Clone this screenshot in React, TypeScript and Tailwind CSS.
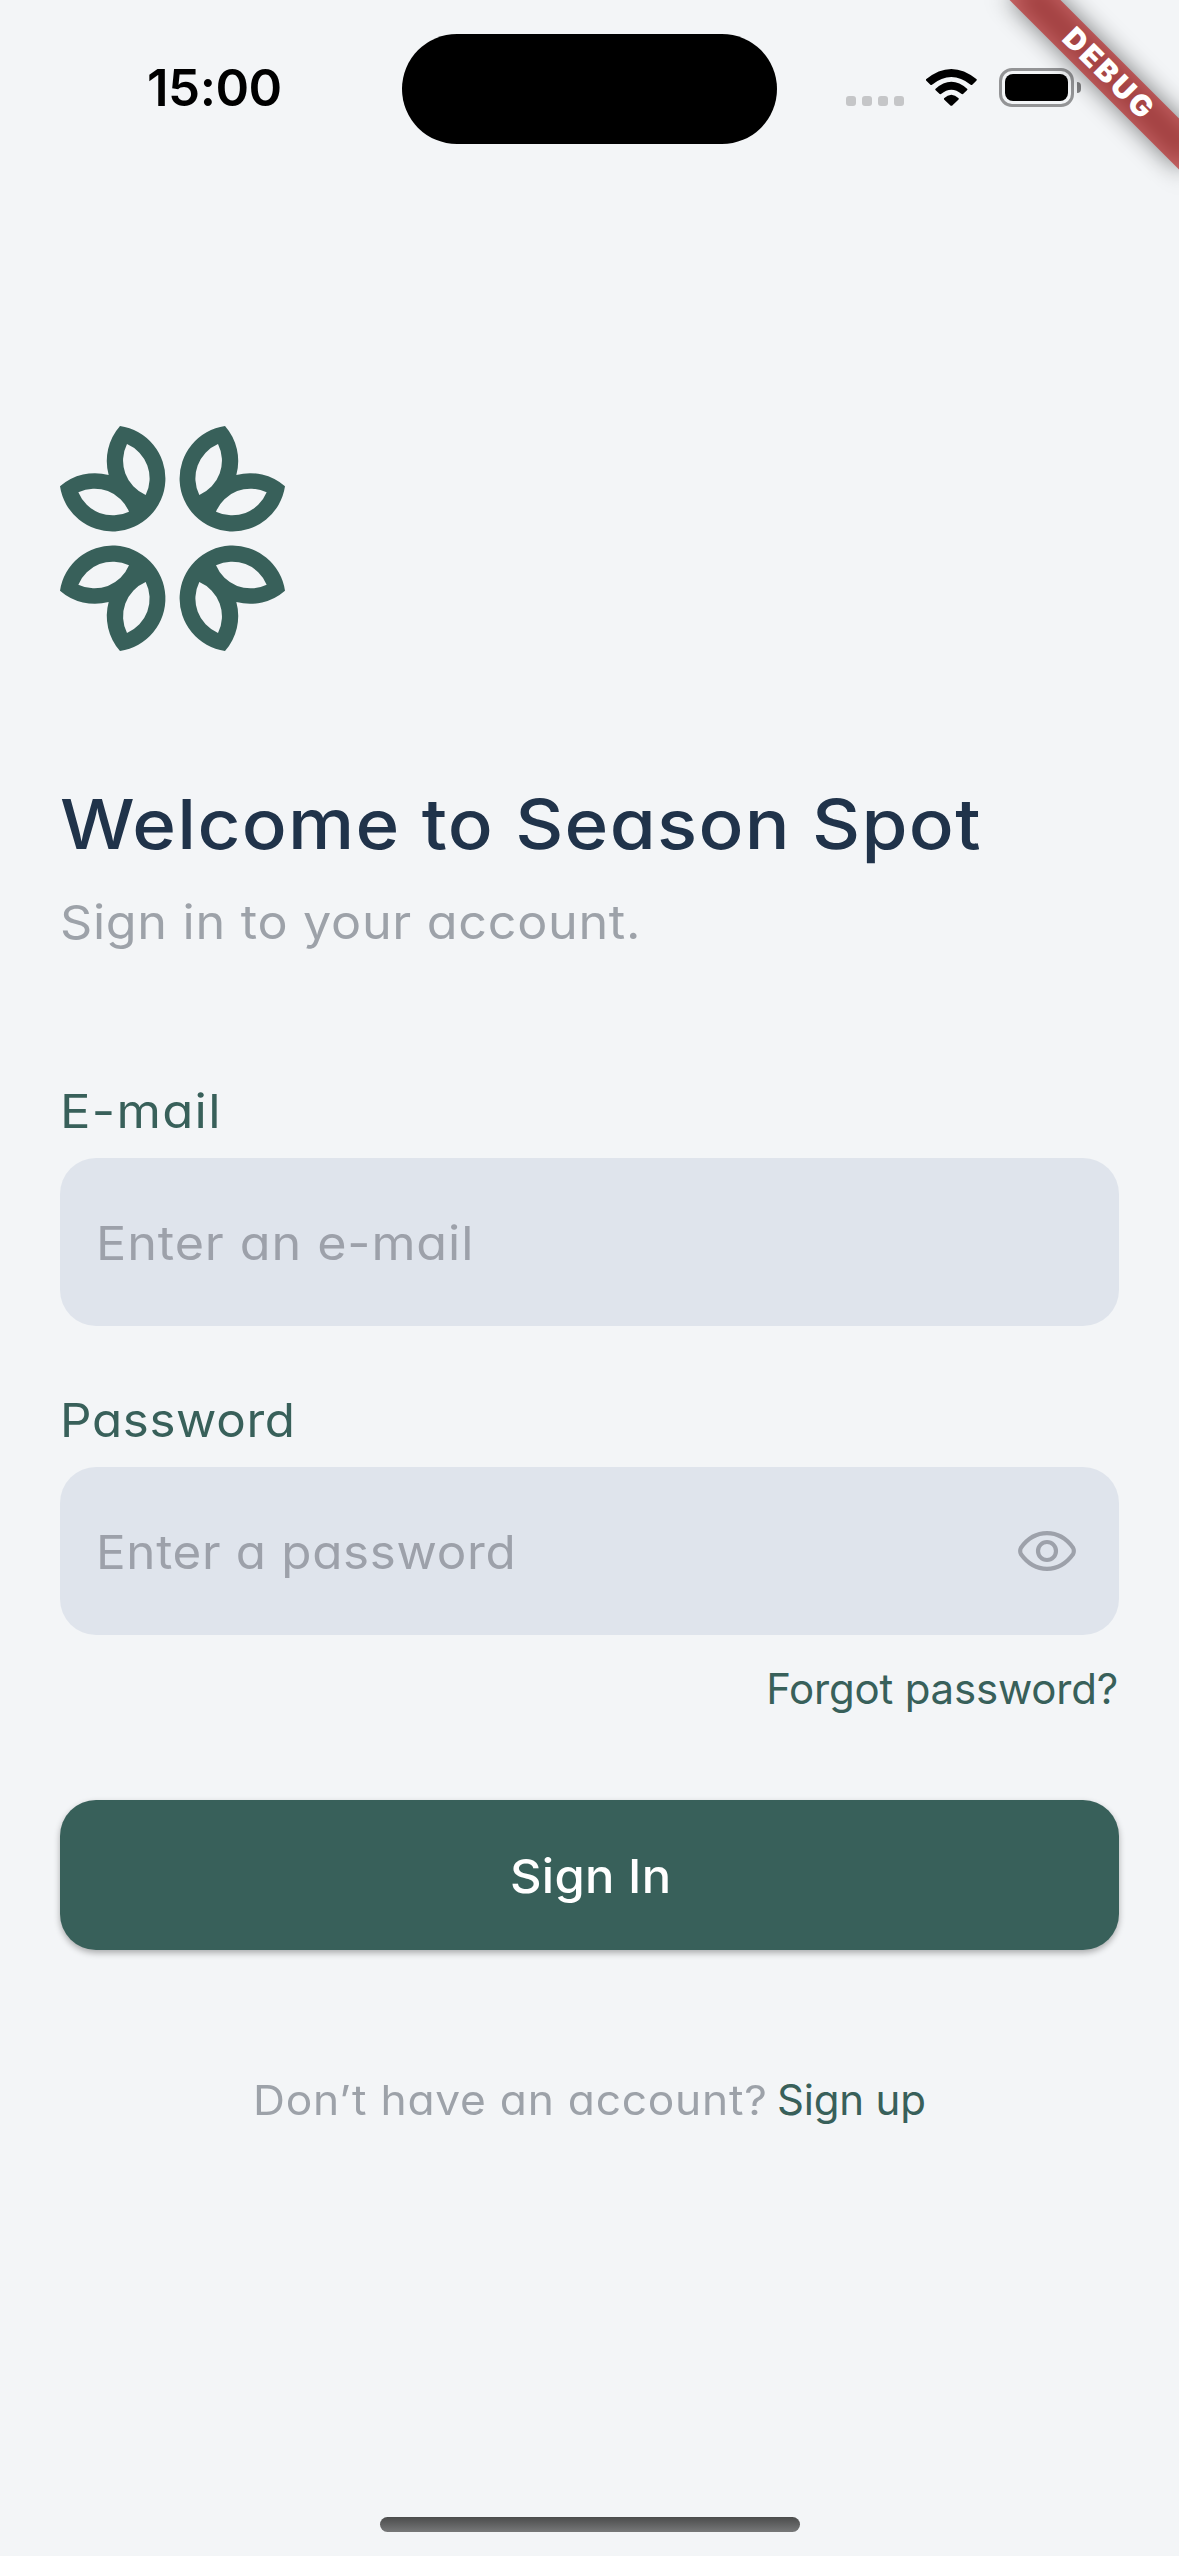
import React from "react";

const petals =
  "M240 48A159 159 0 1 1 60 229A159 159 0 0 1 206 195A159 159 0 0 1 240 48ZM261 102A112 112 0 0 0 317 255A112 112 0 0 0 261 102ZM115 247A112 112 0 0 0 267 305A112 112 0 0 0 115 247Z";

function Logo() {
  return (
    <svg viewBox="60 48 675 675" className="block size-[225px] fill-[#38605a]" fillRule="evenodd">
      <path d={petals} />
      <path d={petals} transform="matrix(-1 0 0 1 795 0)" />
      <path d={petals} transform="matrix(1 0 0 -1 0 771)" />
      <path d={petals} transform="matrix(-1 0 0 -1 795 771)" />
    </svg>
  );
}

function WifiIcon() {
  return (
    <svg viewBox="0 0 153 111" className="block h-[37px] w-[51px]">
      <path d="M0 31Q76-31 152 31Q153 33 151 35L138 48Q136 49 134 47Q76 1 18 47Q16 49 14 48L1 35Q-1 33 0 31Z" />
      <path d="M28 60Q76 17 124 60Q125 62 123 64L111 75Q109 76 107 75Q76 49 45 75Q43 76 41 75L29 64Q27 62 28 60Z" />
      <path d="M54 88Q76 67 98 88Q99 90 97 92L78 110Q76 111 74 110L55 92Q53 90 54 88Z" />
    </svg>
  );
}

function EyeIcon() {
  return (
    <svg viewBox="0 0 174 120" className="block h-[40px] w-[58px]" fill="none" stroke="#9da1aa" strokeWidth="12.5">
      <path d="M9 50C27 25 53 6.500 87 6.500S147 25 165 50Q170 60 165 70C147 95 121 113.500 87 113.500S27 95 9 70Q4 60 9 50Z" />
      <circle cx="87" cy="60" r="27" />
    </svg>
  );
}

function StatusBar() {
  return (
    <header className="flex h-[177px] items-start">
      <div className="mt-[58px] w-[402px] pl-[147px] text-[51px] leading-[60px] font-semibold tracking-[-0.5px] text-black">
        15:00
      </div>
      <div className="mt-[34px] h-[110px] w-[375px] rounded-full bg-black" />
      <div className="mt-[68px] ml-[69px] flex h-[39px] items-start">
        <div className="mt-[28px] flex gap-[6px]">
          {[0, 1, 2, 3].map((i) => (
            <div key={i} className="size-[10px] rounded-[3px] bg-[#c5c6c8]" />
          ))}
        </div>
        <div className="mt-px ml-[22px]">
          <WifiIcon />
        </div>
        <div className="ml-[22px] h-[39px] w-[75px] rounded-[13px] border-[3px] border-[#939496] p-[3px]">
          <div className="h-full rounded-[8px] bg-black" />
        </div>
        <div className="mt-[14px] ml-[3px] h-[11px] w-[4px] rounded-r-full bg-[#7f8082]" />
      </div>
    </header>
  );
}

function DebugBanner() {
  return (
    <div className="pointer-events-none absolute top-0 right-0 size-[240px] overflow-hidden">
      <div className="absolute top-[54px] left-[48px] h-[36px] w-[240px] rotate-45">
        <div className="absolute inset-0 bg-black/50 blur-[12px]" />
        <div className="absolute inset-0 flex items-center justify-center bg-[#b71c1c]/63 pl-[6px] text-[29.5px] leading-none font-black tracking-[2.8px] text-white">
          DEBUG
        </div>
      </div>
    </div>
  );
}

type FieldProps = {
  label: string;
  labelClass: string;
  hint: string;
  hintClass: string;
  icon?: React.ReactNode;
};

function Field({ label, labelClass, hint, hintClass, icon }: FieldProps) {
  return (
    <label className="block">
      <div className={`origin-left text-[47px] leading-[60px] text-[#38605a] ${labelClass}`}>{label}</div>
      <div className="mt-[17px] flex h-[168px] items-center justify-between rounded-[36px] bg-[#dfe4ec] pr-[43px] pl-[36px]">
        <span className={`block origin-left pt-[2px] text-[47px] leading-[60px] text-[#9da1aa] ${hintClass}`}>
          {hint}
        </span>
        {icon}
      </div>
    </label>
  );
}

export default function App() {
  return (
    <div className="relative flex h-[2556px] w-[1179px] flex-col overflow-hidden bg-[#f3f5f7] font-['Inter',sans-serif]">
      <StatusBar />
      <main className="mt-[249px] flex-1 px-[60px] [font-feature-settings:'cv11']">
        <Logo />
        <h1 className="mt-[137px] origin-left scale-x-108 text-[69px] leading-[72px] font-medium tracking-[1.2px] whitespace-nowrap text-[#20334a]">
          Welcome to Season Spot
        </h1>
        <p className="mt-[32px] origin-left scale-x-107 text-[47px] leading-[60px] tracking-[0.65px] text-[#9da2a9]">
          Sign in to your account.
        </p>
        <div className="mt-[129px] flex flex-col gap-[64px]">
          <Field
            label="E-mail"
            labelClass="scale-x-108 tracking-[1.2px]"
            hint="Enter an e-mail"
            hintClass="scale-x-107 tracking-[0.85px]"
          />
          <Field
            label="Password"
            labelClass="scale-x-105 tracking-[0.6px]"
            hint="Enter a password"
            hintClass="scale-x-105 tracking-[0.65px]"
            icon={<EyeIcon />}
          />
        </div>
        <div className="mt-[30px] pr-px text-right text-[42px] leading-[48px] tracking-[-0.2px] text-[#38605a] [font-feature-settings:normal]">
          Forgot password?
        </div>
        <button className="mt-[87px] block h-[150px] w-full rounded-[36px] bg-[#38605a] pt-[2px] pl-[3px] text-[47px] font-medium text-white shadow-[0_3px_6px_rgba(0,0,0,0.3)]">
          <span className="inline-block scale-x-104 tracking-[0.3px]">Sign In</span>
        </button>
        <p className="mt-[125px] flex pl-[193px] text-[41px] leading-[50px] whitespace-nowrap text-[#9da2a9]">
          <span className="block w-[524px] origin-left scale-x-108 tracking-[0.7px]">Don’t have an account?</span>
          <span className="text-[42px] tracking-[-0.2px] text-[#38605a] [font-feature-settings:normal]">Sign up</span>
        </p>
      </main>
      <div className="mx-auto mb-[24px] h-[15px] w-[420px] rounded-full bg-linear-to-b from-[#4b4c4c] to-[#777879]" />
      <DebugBanner />
    </div>
  );
}
